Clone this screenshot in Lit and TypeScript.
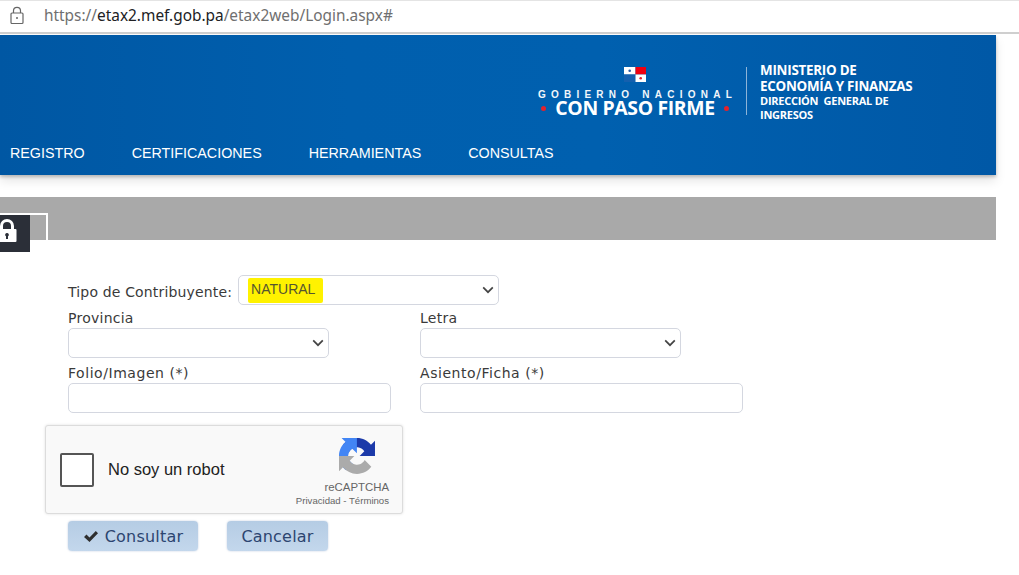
import { LitElement, html, css } from "lit";
import { customElement } from "lit/decorators.js";

const chevron = html`<svg class="chev" width="12" height="8" viewBox="0 0 12 8"><path d="M1.2 1.4 6 6.2l4.8-4.8" fill="none" stroke="#444" stroke-width="1.7"/></svg>`;

@customElement("app-root")
export class AppRoot extends LitElement {
  static styles = css`
    :host { display: block; width: 1019px; height: 575px; overflow: hidden; background: #fff; position: relative; font-family: "DejaVu Sans", sans-serif; color: #3a3a3a; }
    .url { height: 31px; border-top: 1px solid #e4e4e4; border-bottom: 2px solid #cfcfcf; display: flex; align-items: flex-start; padding-left: 9px; gap: 19px; font-family: "Noto Sans", sans-serif; font-size: 15.4px; line-height: 30px; color: #6f6f6f; box-sizing: content-box; margin-bottom: 1px; }
    .url svg { margin-top: 5px; }
    .url b { font-weight: 400; color: #202124; }
    .header { width: 996px; height: 140px; background: linear-gradient(90deg, #0057a3 0%, #005fae 35%, #0060af 60%, #0058a6 100%); box-shadow: 0 2px 3px rgba(0,0,0,.22), 0 6px 10px rgba(0,0,0,.1); display: flex; flex-direction: column; color: #fff; font-family: "Liberation Sans", sans-serif; }
    .logos { display: flex; padding: 27px 0 0 537px; height: 61px; }
    .gob { width: 196px; display: flex; flex-direction: column; align-items: center; }
    .flag { margin-top: 5px; display: block; }
    .gn { font-size: 10px; letter-spacing: 5.25px; line-height: 11px; white-space: nowrap; margin-top: 7px; font-weight: 700; margin-right: -5px; opacity: .95; }
    .cpf { display: flex; align-items: center; gap: 9px; font-size: 19.4px; line-height: 16px; font-weight: 700; white-space: nowrap; font-family: "Open Sans", sans-serif; letter-spacing: -.35px; }
    .dot { width: 5px; height: 5px; border-radius: 50%; background: #e3222c; }
    .sep { width: 1px; height: 48px; background: #8db4d8; margin: 5px 13px 0 13px; }
    .min { font-weight: 700; font-family: "Open Sans", sans-serif; display: flex; flex-direction: column; letter-spacing: -.25px; }
    .min .a { font-size: 13.4px; line-height: 16px; white-space: nowrap; }
    .min .b { font-size: 11px; line-height: 14px; white-space: nowrap; }
    nav { display: flex; gap: 47px; padding: 22px 0 0 10px; font-size: 14.3px; line-height: 17px; }
    .bar { position: relative; width: 996px; height: 43px; margin-top: 22px; background: #a9a9a9; }
    .tab { position: absolute; left: -2px; top: 16px; width: 46px; height: 25px; border: 2px solid #fff; border-bottom: 0; }
    .lock { position: absolute; left: 0; top: 18px; width: 30px; height: 37px; background: #2b2f38; overflow: hidden; }
    .lock svg { position: absolute; left: -3px; top: 3px; }
    form { display: block; padding: 35px 0 0 68px; font-size: 14px; letter-spacing: .25px; }
    .tipo { display: flex; align-items: center; gap: 6px; height: 30px; letter-spacing: .16px; }
    .tipo > span { padding-top: 3px; }
    .sel, .inp { box-sizing: border-box; border: 1px solid #d4d7e0; border-radius: 5px; background: #fff; height: 30px; display: flex; align-items: center; justify-content: space-between; padding-right: 4px; }
    .sel.big { width: 261px; padding-left: 9px; font-family: "Liberation Sans", sans-serif; font-size: 14px; letter-spacing: 0; color: #4a4a30; }
    .sel.small { width: 261px; }
    mark { background: #fff200; color: #555530; padding: 3px 8px 6px 3px; border-radius: 2px; }
    .grid { display: grid; grid-template-columns: 323px 323px; column-gap: 29px; }
    .field label { display: block; height: 23px; line-height: 27px; white-space: nowrap; }
    .field label.req { height: 25px; line-height: 31px; letter-spacing: .55px; }
    .inp { width: 100%; }
    .captcha { position: relative; box-sizing: border-box; margin: 12px 0 0 -23px; width: 358px; height: 89px; background: #f9f9f9; border: 1px solid #dcdcdc; border-radius: 3px; box-shadow: 0 0 3px rgba(0,0,0,.12); display: flex; align-items: center; font-family: "Liberation Sans", sans-serif; letter-spacing: 0; color: #222; }
    .box { width: 30px; height: 30px; border: 2px solid #555; border-radius: 2px; background: #fff; margin: 0 14px 0 14px; box-sizing: content-box; }
    .nr { font-size: 16.5px; flex: 1; }
    .rc { display: flex; flex-direction: column; align-items: flex-end; padding-top: 6px; margin-right: 13px; color: #666; }
    .rc svg { display: block; margin-right: 14px; }
    .rc .t { font-size: 11.4px; line-height: 14px; margin-top: 6px; }
    .rc .p { font-size: 9.6px; line-height: 12px; margin-top: 1px; white-space: nowrap; }
    .btns { display: flex; gap: 29px; margin-top: 7px; }
    .btn { box-sizing: border-box; height: 30px; display: flex; align-items: center; justify-content: center; background: linear-gradient(180deg, #b5cce4, #c3d7ec); border-radius: 4px; color: #2c4570; font-size: 16px; letter-spacing: .2px; border: 0; box-shadow: 0 0 2px rgba(90,120,170,.4); }
    .btn.c1 { width: 130px; gap: 6px; }
    .btn.c2 { width: 101px; }
    .btn svg { display: block; }
  `;

  render() {
    return html`
      <div class="url">
        <svg width="16" height="20" viewBox="0 0 16 20"><path d="M4.500 7V4.800a3.500 3.500 0 0 1 7 0V7M3 7h10a1 1 0 0 1 1 1v8.500a1 1 0 0 1-1 1H3a1 1 0 0 1-1-1V8a1 1 0 0 1 1-1z" fill="none" stroke="#666" stroke-width="1.200"/><circle cx="8" cy="12" r="1" fill="#666"/></svg>
        <div>https://<b>etax2.mef.gob.pa</b>/etax2web/Login.aspx#</div>
      </div>
      <div class="header">
        <div class="logos">
          <div class="gob">
            <svg class="flag" width="22" height="15" viewBox="0 0 22 15">
              <rect x="0" y="0" width="11.500" height="7.500" fill="#fff"/>
              <rect x="11.500" y="0" width="10.500" height="7.500" fill="#f00010"/>
              <rect x="0" y="7.500" width="11.500" height="7.500" fill="#1560ae"/>
              <rect x="11.500" y="7.500" width="10.500" height="7.500" fill="#fff"/>
              <circle cx="5.700" cy="3.800" r="1.300" fill="#2a5aa8"/>
              <circle cx="16.700" cy="11.200" r="1.300" fill="#e3222c"/>
            </svg>
            <div class="gn">GOBIERNO NACIONAL</div>
            <div class="cpf"><span class="dot"></span>CON PASO FIRME<span class="dot"></span></div>
          </div>
          <div class="sep"></div>
          <div class="min">
            <div class="a">MINISTERIO DE</div>
            <div class="a">ECONOMÍA Y FINANZAS</div>
            <div class="b">DIRECCIÓN&nbsp; GENERAL DE</div>
            <div class="b">INGRESOS</div>
          </div>
        </div>
        <nav><span>REGISTRO</span><span>CERTIFICACIONES</span><span>HERRAMIENTAS</span><span>CONSULTAS</span></nav>
      </div>
      <div class="bar">
        <div class="tab"></div>
        <div class="lock">
          <svg width="20" height="26" viewBox="0 0 20 26"><path fill="#fff" fill-rule="evenodd" d="M3 11V8a7 7 0 0 1 14 0v3h1.500a1 1 0 0 1 1 1v11a1 1 0 0 1-1 1H1.500a1 1 0 0 1-1-1V12a1 1 0 0 1 1-1zM6 11h8V8a4 4 0 0 0-8 0zM10 15a1.800 1.800 0 0 0-1 3.300V21h2v-2.700A1.800 1.800 0 0 0 10 15z"/></svg>
        </div>
      </div>
      <form>
        <div class="tipo">
          <span>Tipo de Contribuyente:</span>
          <div class="sel big"><mark>NATURAL</mark>${chevron}</div>
        </div>
        <div class="grid">
          <div class="field"><label>Provincia</label><div class="sel small"><span></span>${chevron}</div></div>
          <div class="field"><label>Letra</label><div class="sel small"><span></span>${chevron}</div></div>
          <div class="field"><label class="req">Folio/Imagen (*)</label><div class="inp"></div></div>
          <div class="field"><label class="req">Asiento/Ficha (*)</label><div class="inp"></div></div>
        </div>
        <div class="captcha">
          <div class="box"></div>
          <div class="nr">No soy un robot</div>
          <div class="rc">
            <svg width="36" height="36" viewBox="0 0 64 64">
              <path fill="#1c3aa9" d="M64 31.955l-.033-1.370V4.687l-7.160 7.160C50.948 4.674 42.033.093 32.050.093c-10.400 0-19.622 4.960-25.458 12.640l11.736 11.860a15.550 15.550 0 0 1 4.754-5.334c2.050-1.600 4.952-2.906 8.968-2.906.485 0 .860.057 1.135.163 4.976.393 9.288 3.140 11.828 7.124l-8.307 8.307L64 31.953"/>
              <path fill="#4285f4" d="M31.862 0l-1.370.033H4.594l7.160 7.160C4.580 13.050 0 21.967 0 31.950c0 10.400 4.960 19.622 12.640 25.458l11.860-11.736a15.550 15.550 0 0 1-5.334-4.754c-1.600-2.050-2.906-4.952-2.906-8.968 0-.485.057-.860.163-1.135.393-4.976 3.140-9.288 7.124-11.828l8.307 8.307L31.860 0"/>
              <path fill="#ababab" d="M.001 31.953l.033 1.370v25.898l7.160-7.160c5.860 7.173 14.774 11.754 24.760 11.754 10.400 0 19.622-4.960 25.458-12.640l-11.736-11.860a15.550 15.550 0 0 1-4.754 5.334c-2.050 1.600-4.952 2.906-8.968 2.906-.485 0-.860-.057-1.135-.163-4.976-.393-9.288-3.140-11.828-7.124l8.307-8.307c-10.522.001-22.400.026-28.303-.008"/>
            </svg>
            <div class="t">reCAPTCHA</div>
            <div class="p">Privacidad - Términos</div>
          </div>
        </div>
        <div class="btns">
          <div class="btn c1"><svg width="16" height="13" viewBox="0 0 16 13"><path d="M1 7l2.500-2.500 3 3L12.800 1 15 3.300 6.500 12z" fill="#2f2f2f"/></svg>Consultar</div>
          <div class="btn c2">Cancelar</div>
        </div>
      </form>
    `;
  }
}
